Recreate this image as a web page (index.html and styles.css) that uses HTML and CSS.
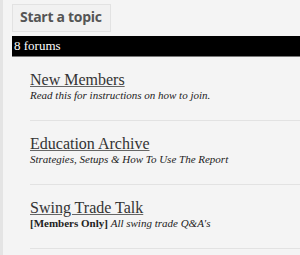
FILE: index.html
```html
<!DOCTYPE html>
<html lang="en">
<head>
    <meta charset="UTF-8">
    <title>Forums</title>
    <link rel="stylesheet" href="styles.css">
</head>
<body>
    <div class="page">
        <div class="toolbar">
            <a class="btn-topic" href="#">Start a topic</a>
        </div>

        <div class="forum-count">8 forums</div>

        <ul class="forum-list">
            <li class="forum">
                <a class="forum-title" href="#">New Members</a>
                <div class="forum-desc"><em>Read this for instructions on how to join.</em></div>
            </li>
            <li class="forum">
                <a class="forum-title" href="#">Education Archive</a>
                <div class="forum-desc"><em>Strategies, Setups &amp; How To Use The Report</em></div>
            </li>
            <li class="forum">
                <a class="forum-title" href="#">Swing Trade Talk</a>
                <div class="forum-desc"><strong>[Members Only]</strong> <em>All swing trade Q&amp;A's</em></div>
            </li>
        </ul>
    </div>
</body>
</html>
```

FILE: styles.css
```css
body {
    margin: 0;
    background: #f4f4f4;
    font-family: 'Liberation Serif', 'Times New Roman', serif;
    color: #222;
}

.page {
    border-left: 3px solid #e4e4e4;
    padding-left: 9px;
    min-height: 255px;
    box-sizing: border-box;
}

.toolbar {
    padding-top: 4px;
    height: 32px;
    box-sizing: border-box;
}

.btn-topic {
    display: inline-block;
    font-family: 'Open Sans', Arial, sans-serif;
    font-weight: bold;
    font-size: 14px;
    letter-spacing: -0.3px;
    color: #555;
    text-decoration: none;
    background: #f1f1f1;
    border: 1px solid #e2e2e2;
    padding: 0 8px 2px 7px;
    line-height: 24px;
}

.forum-count {
    margin-top: 4px;
    background: #000;
    color: #fff;
    font-size: 13px;
    line-height: 20px;
    padding-left: 2px;
    border-bottom: 1px solid #777;
}

.forum-list {
    list-style: none;
    margin: 0;
    padding: 0 0 0 18px;
}

.forum {
    border-bottom: 1px solid #e2e2e2;
    padding: 13px 0 18px;
}

.forum-title {
    font-size: 16px;
    line-height: 19px;
    color: #333;
    text-decoration: underline;
    text-decoration-color: #666;
}

.forum-desc {
    font-size: 11px;
    line-height: 13px;
    color: #222;
}
```
